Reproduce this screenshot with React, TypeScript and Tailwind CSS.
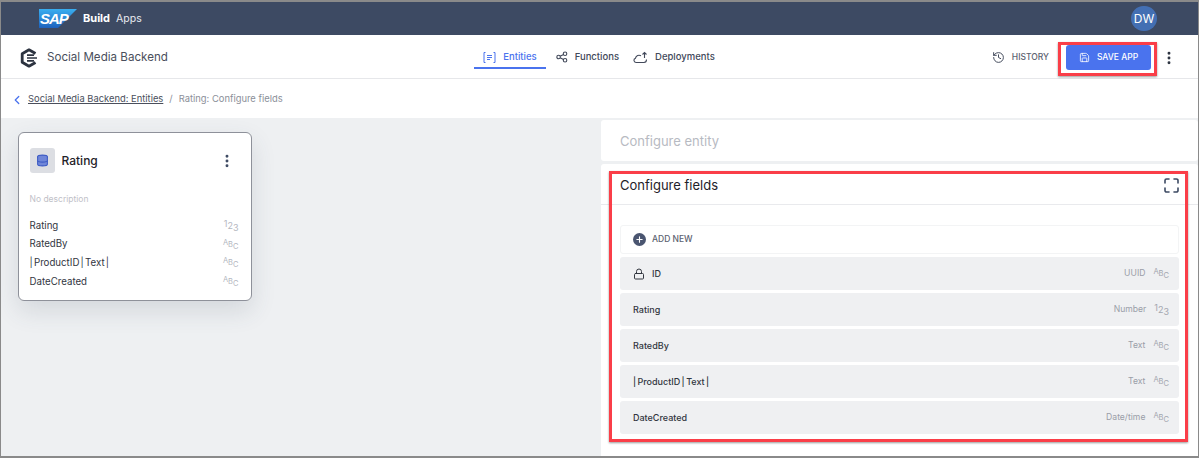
import React from "react";
import { History, Save, MoreVertical, Lock, Plus, Database, ChevronLeft } from "lucide-react";

function TypeGlyph({ kind, color = "text-[#a3a6af]" }: { kind: "abc" | "num"; color?: string }) {
  const chars = kind === "abc" ? ["A", "B", "C"] : ["1", "2", "3"];
  return (
    <span className={`flex h-[14px] items-start leading-[9px] ${color} ${kind === "abc" ? "text-[7.5px]" : "text-[9px]"}`}>
      <span className="mt-0">{chars[0]}</span>
      <span className="mt-[2px]">{chars[1]}</span>
      <span className="mt-[4px]">{chars[2]}</span>
    </span>
  );
}

function NavItem({ icon, label, active, tight }: { icon: React.ReactNode; label: string; active?: boolean; tight?: boolean }) {
  return (
    <div className={`flex h-[34px] items-center gap-[7px] border-b-2 pt-[12px] text-[9.5px] font-medium ${tight ? "pl-[10px] pr-[5px]" : "px-[9px]"} ${active ? "border-[#4a73ee] text-[#4a73ee]" : "border-transparent text-[#42495a]"}`}>
      {icon}
      <span>{label}</span>
    </div>
  );
}

function FieldRow({ icon, name, type, kind }: { icon?: React.ReactNode; name: string; type: string; kind: "abc" | "num" }) {
  return (
    <div className="flex h-[33px] items-center rounded-[3px] bg-[#eff0f2] pl-[13px] pr-[10px]">
      {icon}
      <span className="text-[9px] font-medium text-[#32363f] [word-spacing:-1px]">{name}</span>
      <span className="ml-auto mr-[8px] text-[8.6px] text-[#9a9ea8]">{type}</span>
      <TypeGlyph kind={kind} />
    </div>
  );
}

function CardRow({ name, kind }: { name: string; kind: "abc" | "num" }) {
  return (
    <div className="flex h-[18.67px] items-center justify-between text-[9.7px] text-[#32363f]">
      <span className="[word-spacing:-1.5px]">{name}</span>
      <TypeGlyph kind={kind} color="text-[#b4b7bf]" />
    </div>
  );
}

export default function App() {
  return (
    <div className="relative flex h-[458px] w-[1199px] flex-col overflow-hidden border-x border-t-2 border-b-2 border-x-[#8a8a8a] border-y-[#8a8a8a] bg-white font-['Inter',sans-serif]">
      {/* Shell bar */}
      <header className="flex h-[33px] shrink-0 items-center bg-[#3d4a63] pl-[38px] pr-[41px] text-white">
        <div className="relative h-[19px] w-[38px]">
          <svg width="38" height="19" viewBox="0 0 38 19" className="absolute inset-0">
            <defs>
              <linearGradient id="sap" x1="0" y1="0" x2="0" y2="1">
                <stop offset="0" stopColor="#3aaef0" />
                <stop offset="1" stopColor="#1d62bd" />
              </linearGradient>
            </defs>
            <polygon points="0,0 38,0 19,19 0,19" fill="url(#sap)" />
          </svg>
          <span className="absolute left-[1px] top-[2px] font-['Liberation_Sans',sans-serif] text-[15px] font-bold italic leading-[15px] tracking-[-1px] text-white">SAP</span>
        </div>
        <span className="ml-[6px] text-[11px] font-bold">Build</span>
        <span className="ml-[6px] text-[10.5px] text-[#e6e9ef]">Apps</span>
        <div className="ml-auto flex h-[25px] w-[26px] items-center justify-center rounded-full bg-[#436fb3] text-[12px] text-white">DW</div>
      </header>

      {/* App header */}
      <div className="grid h-[44px] shrink-0 grid-cols-[1fr_auto_1fr] items-center border-b border-[#e6e7ea] pl-[18px] pr-[21px]">
        <div className="flex translate-y-[1px] items-center gap-[8px]">
          <svg width="20" height="20" viewBox="0 0 20 20" fill="none">
            <path d="M16.500 5.500 10 1.800 3.200 5.700v8.600L10 18.200l6.500-3.700" stroke="#2c3340" strokeWidth="2.800" strokeLinejoin="round" />
            <path d="M8 7.200h7M8 10h10M8 12.800h7" stroke="#2c3340" strokeWidth="1.700" />
          </svg>
          <span className="text-[11.6px] text-[#4a4f5c]">Social Media Backend</span>
        </div>
        <nav className="flex translate-x-[1px] items-center self-start">
          <NavItem active label="Entities" icon={
            <svg width="13" height="13" viewBox="0 0 13 13" fill="none" stroke="currentColor" strokeWidth="1">
              <path d="M2.500 1.500H1v10h1.500M10.500 1.500H12v10h-1.500M4 4.500h5M4 6.500h5M4 8.500h3" />
            </svg>
          } />
          <NavItem tight label="Functions" icon={
            <svg width="12" height="12" viewBox="0 0 13 13" fill="none" stroke="currentColor" strokeWidth="1.200">
              <circle cx="2.800" cy="6.500" r="1.900" />
              <circle cx="9.800" cy="3" r="1.900" />
              <circle cx="9.800" cy="10" r="1.900" />
              <path d="M4.500 5.600l3.600-1.800M4.500 7.400l3.600 1.800" />
            </svg>
          } />
          <NavItem label="Deployments" icon={
            <svg width="15" height="13" viewBox="0 0 15 13" fill="none" stroke="currentColor" strokeWidth="1.100">
              <path d="M13.500 8.500c0 2-1 3-2.500 3H3a2.200 2.200 0 0 1-.5-4.300A3.600 3.600 0 0 1 8 4.800" />
              <path d="M11.500 7V1.500M9.500 3.500l2-2 2 2" />
            </svg>
          } />
        </nav>
        <div className="flex translate-y-[1px] items-center justify-end">
          <History size={13} className="text-[#42495a]" strokeWidth={1.8} />
          <span className="ml-[7px] text-[8.500px] font-medium text-[#5c6270]">HISTORY</span>
          <button className="ml-[17px] flex h-[25px] w-[85px] items-center justify-center gap-[7px] rounded-[3px] bg-[#4a73ee] text-[8.500px] font-medium text-white">
            <Save size={11} strokeWidth={1.8} />
            SAVE APP
          </button>
          <MoreVertical size={16} strokeWidth={2.4} className="ml-[10px] text-[#2c3340]" />
        </div>
      </div>

      {/* Breadcrumb */}
      <div className="flex h-[39px] shrink-0 items-center pl-[9px] pt-[2px] text-[9.4px]">
        <ChevronLeft size={14} strokeWidth={2.2} className="text-[#4a73ee]" />
        <span className="ml-[4px] text-[#4a4f5c] underline">Social Media Backend: Entities</span>
        <span className="mx-[6px] text-[#8b8f99]">/</span>
        <span className="text-[#8b8f99]">Rating: Configure fields</span>
      </div>

      {/* Main */}
      <main className="flex min-h-0 flex-1 bg-[#eef0f2]">
        <section className="w-[600px] shrink-0 pl-[16.500px] pt-[14px]">
          <div className="h-[169px] w-[234px] rounded-[6px] border border-[#8e919a] bg-white pl-[11px] pr-[12px] pt-[15px] shadow-[0_10px_24px_rgba(60,70,90,0.14)]">
            <div className="flex items-center">
              <div className="flex h-[25px] w-[25px] items-center justify-center rounded-[3px] bg-[#dcdee3]">
                <Database size={13} strokeWidth={2} className="fill-[#6f86d8] text-[#3d5bc4]" />
              </div>
              <span className="ml-[7px] text-[12px] font-medium text-[#1f2229]">Rating</span>
              <MoreVertical size={16} strokeWidth={2.4} className="ml-auto mr-[4px] text-[#3d4a63]" />
            </div>
            <div className="mt-[20px] text-[8.500px] text-[#bfc1c8]">No description</div>
            <div className="mt-[11px] flex flex-col">
              <CardRow name="Rating" kind="num" />
              <CardRow name="RatedBy" kind="abc" />
              <CardRow name="| ProductID | Text |" kind="abc" />
              <CardRow name="DateCreated" kind="abc" />
            </div>
          </div>
        </section>

        <section className="flex min-w-0 flex-1 flex-col gap-[3px] pt-[2px]">
          <div className="flex h-[41px] shrink-0 items-center rounded-[3px] bg-white pl-[19px] pt-[2px] text-[13px] text-[#b7bac2]">Configure entity</div>
          <div className="flex-1 rounded-t-[3px] bg-white">
            <div className="flex h-[41px] items-center justify-between border-b border-[#e9eaed] pl-[19px] pr-[19px] pt-[3px]">
              <span className="text-[13px] text-[#1f2229]">Configure fields</span>
              <svg width="15" height="15" viewBox="0 0 15 15" fill="none" stroke="#3d4a63" strokeWidth="1.600" strokeLinecap="round">
                <path d="M1 5V2.500A1.500 1.500 0 0 1 2.500 1H5M10 1h2.500A1.500 1.500 0 0 1 14 2.500V5M14 10v2.500a1.500 1.500 0 0 1-1.500 1.500H10M5 14H2.500A1.500 1.500 0 0 1 1 12.500V10" />
              </svg>
            </div>
            <div className="flex flex-col gap-[3px] pl-[19px] pr-[19px] pt-[20px]">
              <div className="flex h-[29px] items-center rounded-[3px] border border-[#f3f4f5] pl-[12px] text-[8.500px] font-medium text-[#5c6270]">
                <span className="mr-[6px] flex h-[13px] w-[13px] items-center justify-center rounded-full bg-[#4a5570]">
                  <Plus size={9} strokeWidth={3} className="text-white" />
                </span>
                ADD NEW
              </div>
              <FieldRow name="ID" type="UUID" kind="abc" icon={<Lock size={12} strokeWidth={2} className="mr-[7px] text-[#32363f]" />} />
              <FieldRow name="Rating" type="Number" kind="num" />
              <FieldRow name="RatedBy" type="Text" kind="abc" />
              <FieldRow name="| ProductID | Text |" type="Text" kind="abc" />
              <FieldRow name="DateCreated" type="Date/time" kind="abc" />
            </div>
          </div>
        </section>
      </main>

      {/* Annotation boxes */}
      <div className="pointer-events-none absolute left-[1057px] top-[40px] h-[34px] w-[99px] border-[3px] border-[#fa3e48] shadow-[0_1px_2px_rgba(0,0,0,0.4)]" />
      <div className="pointer-events-none absolute left-[608px] top-[169px] h-[271px] w-[579px] border-[3px] border-[#fa3e48] shadow-[0_1px_2px_rgba(0,0,0,0.4)]" />
    </div>
  );
}
